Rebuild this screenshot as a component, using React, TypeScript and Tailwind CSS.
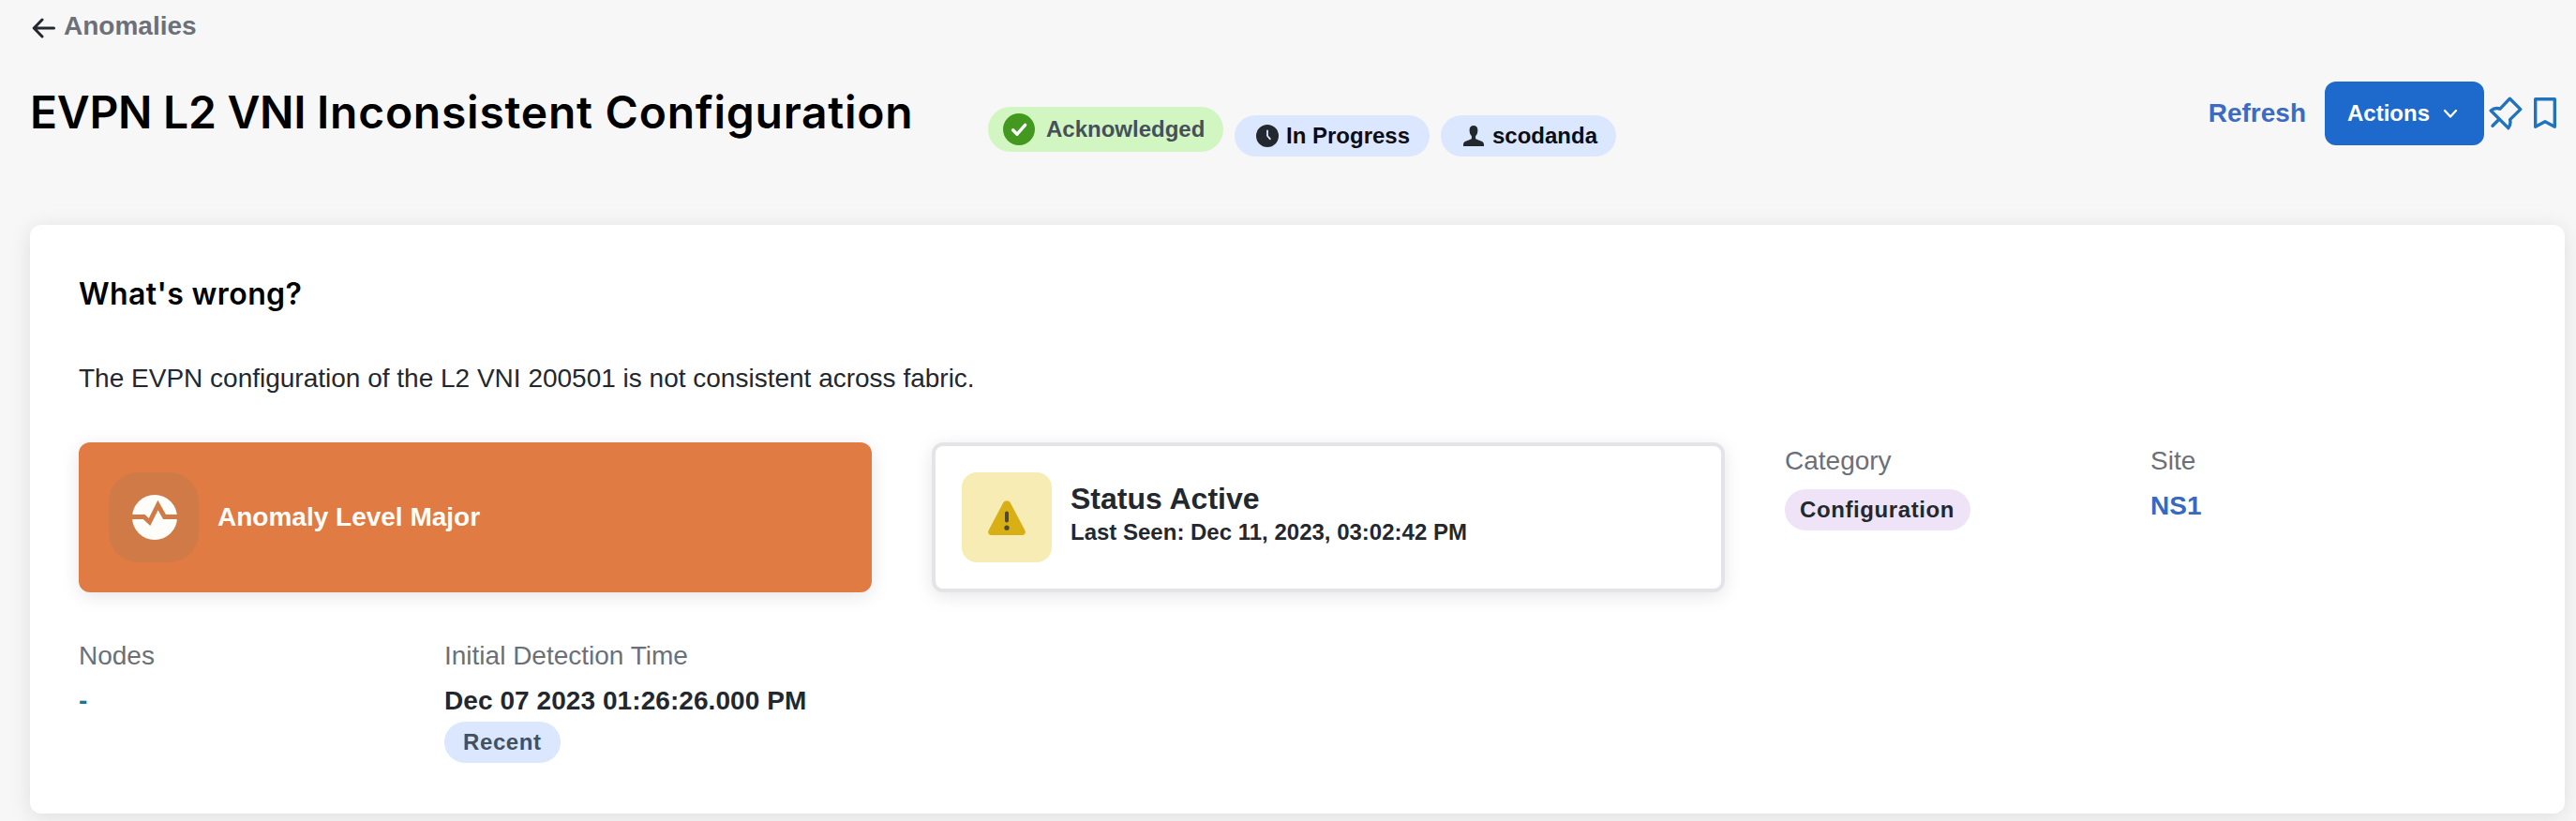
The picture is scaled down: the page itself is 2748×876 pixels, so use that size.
import type { ReactNode } from "react";
import clsx from "clsx";

function ArrowLeftIcon() {
  return (
    <svg width="26" height="22" viewBox="0 0 26 22" fill="none" stroke="#23282e" strokeWidth="3" strokeLinecap="round" strokeLinejoin="round">
      <path d="M11 2 2.2 11 11 20M2.5 11H23.5" />
    </svg>
  );
}

function CheckIcon() {
  return (
    <svg width="34" height="34" viewBox="0 0 34 34" fill="none">
      <circle cx="17" cy="17" r="17" fill="#43991f" />
      <path d="M10.6 17.8 15 22.2 23.6 12.4" stroke="#fff" strokeWidth="3.4" strokeLinecap="round" strokeLinejoin="round" />
    </svg>
  );
}

function ClockIcon() {
  return (
    <svg width="24" height="24" viewBox="0 0 24 24" fill="none">
      <circle cx="12" cy="12" r="12" fill="#23282e" />
      <path d="M12 6.5V12L14.8 15.2" stroke="#dbe7ff" strokeWidth="1.8" strokeLinecap="round" strokeLinejoin="round" />
    </svg>
  );
}

function UserIcon() {
  return (
    <svg width="22" height="22" viewBox="0 0 22 22" fill="#23282e">
      <path d="M11 0c2.700 0 4.400 1.800 4.400 4.800 0 3-.9 5.200-2.300 6.400v2.200c0 .5.200.8.700 1L19.500 16.700C21.200 17.400 22 18.500 22 20.200V22H0v-1.800c0-1.700.8-2.800 2.500-3.500l5.700-2.300c.5-.2.700-.5.700-1v-2.200C7.500 10 6.600 7.800 6.600 4.800 6.600 1.800 8.300 0 11 0Z" />
    </svg>
  );
}

function PinIcon() {
  return (
    <svg width="36" height="36" viewBox="0 0 36 36" fill="none" stroke="#2173be" strokeWidth="3.4" strokeLinecap="round" strokeLinejoin="round">
      <path d="M22.400 2.200 33.800 13.600 22.600 24.600C23.400 28 23 31 20.800 33.600L2.200 15C5 12.600 8.600 12 12 13.200Z" />
      <path d="M11 24.200 4 31.200" />
    </svg>
  );
}

function BookmarkIcon() {
  return (
    <svg width="24" height="34" viewBox="0 0 24 34" fill="none" stroke="#2173be" strokeWidth="3.4" strokeLinejoin="round">
      <path d="M1.700 1.700H22.300V31.200L12 25.800 1.700 31.200Z" />
    </svg>
  );
}

function PulseIcon() {
  return (
    <svg width="48" height="48" viewBox="0 0 48 48" fill="none">
      <circle cx="24" cy="24" r="24" fill="#fffdfa" />
      <path d="M-1 23.500H12.600L18.500 29 27.500 11 34.500 23.500H49" stroke="#cf7a47" strokeWidth="5" />
    </svg>
  );
}

function WarningIcon() {
  return (
    <svg width="40" height="37" viewBox="0 0 40 37" fill="none">
      <path d="M16.300 2.300C17.900-.6 22.100-.6 23.700 2.300L39.300 31.800C40.700 34.300 39.300 37 36.500 37H3.500C.7 37-.7 34.300.7 31.800Z" fill="#d9af16" />
      <path d="M20 13.600V21.600" stroke="#4f4a33" strokeWidth="4" strokeLinecap="round" />
      <circle cx="20" cy="29.200" r="2.600" fill="#4f4a33" />
    </svg>
  );
}

function Pill({ className, children }: { className: string; children: ReactNode }) {
  return (
    <div className={clsx("flex shrink-0 items-center rounded-full text-2xl font-bold whitespace-nowrap", className)}>
      {children}
    </div>
  );
}

function Field({ label, className, children }: { label: string; className?: string; children: ReactNode }) {
  return (
    <div className={clsx("pt-0.5 text-[28px] leading-9 whitespace-nowrap", className)}>
      <h3 className="text-[#6b7078]">{label}</h3>
      {children}
    </div>
  );
}

export default function App() {
  return (
    <div className="h-[876px] overflow-hidden bg-[#f7f7f7] pr-3 pl-8 font-['Liberation_Sans',Arial,sans-serif] text-[#23282e]">
      {/* Breadcrumb */}
      <a href="#" className="flex w-fit items-center gap-2 pt-3 pl-[2px] text-[28px] leading-8 font-bold text-[#6b7079]">
        <span className="mt-1">
          <ArrowLeftIcon />
        </span>
        Anomalies
      </a>

      {/* Title bar */}
      <div className="mt-[43px] flex h-20 items-start">
        <h1 className="mt-[3px] w-[1022px] font-['Inter',sans-serif] text-[48px] leading-[60px] font-semibold tracking-[0.75px] whitespace-nowrap text-black">
          <span className="tracking-[-0.28px]">EVPN L2 VNI </span>
          Inconsistent Configuration
        </h1>
        <div className="flex items-start gap-3">
          <Pill className="mt-[27px] h-12 w-[251px] gap-3 bg-[#d1f6c1] pl-4 text-[#45505a]">
            <CheckIcon />
            Acknowledged
          </Pill>
          <Pill className="mt-9 h-11 w-[208px] gap-2 bg-[#dbe7ff] pl-[23px] text-[#0b0c14]">
            <ClockIcon />
            In Progress
          </Pill>
          <Pill className="mt-9 h-11 w-[187px] gap-[9px] bg-[#dbe7ff] pl-6 text-[#0b0c14]">
            <UserIcon />
            scodanda
          </Pill>
        </div>

        <div className="ml-auto flex h-[68px] items-center pr-[9px]">
          <a href="#" className="text-[28px] font-bold text-[#3c6bc4]">
            Refresh
          </a>
          <button className="ml-5 flex h-[68px] w-[170px] items-center rounded-xl bg-[#1d69cc] pl-6 text-2xl font-bold text-white">
            Actions
            <svg className="ml-3.5" width="16" height="11" viewBox="0 0 16 11" fill="none" stroke="#fff" strokeWidth="2.300" strokeLinecap="round" strokeLinejoin="round">
              <path d="M2 2 8 8.500 14 2" />
            </svg>
          </button>
          <span className="ml-[5px]">
            <PinIcon />
          </span>
          <span className="ml-3">
            <BookmarkIcon />
          </span>
        </div>
      </div>

      {/* Summary card */}
      <section className="mt-[73px] h-[628px] rounded-xl bg-white pt-[54px] pl-[52px] shadow-[0_4px_24px_rgba(0,0,0,0.1)]">
        <h2 className="font-['Inter',sans-serif] text-[32px] leading-10 font-semibold tracking-[0.4px] text-black">What's wrong?</h2>
        <p className="mt-[50px] text-[28px] leading-10">
          The EVPN configuration of the L2 VNI 200501 is not consistent across fabric.
        </p>

        <div className="mt-12 grid w-[2536px] grid-cols-20 gap-x-16 gap-y-12">
          <div className="col-span-7 flex h-40 items-center gap-5 rounded-xl bg-[#e07b43] px-8 shadow-[0_4px_20px_rgba(0,0,0,0.1)]">
            <div className="flex size-24 items-center justify-center rounded-[32px] bg-[#cf7a47] pl-0.5">
              <PulseIcon />
            </div>
            <span className="text-[28px] font-bold text-[#fffdfa]">Anomaly Level Major</span>
          </div>

          <div className="col-span-7 flex h-40 items-center gap-5 rounded-xl border-4 border-[#e3e4e8] bg-white px-7 shadow-[0_4px_20px_rgba(0,0,0,0.1)]">
            <div className="flex size-24 items-center justify-center rounded-2xl bg-[#f7ecb3]">
              <WarningIcon />
            </div>
            <div className="pb-1 font-bold">
              <p className="text-[32px] leading-9">Status Active</p>
              <p className="text-2xl leading-9">Last Seen: Dec 11, 2023, 03:02:42 PM</p>
            </div>
          </div>

          <Field label="Category" className="col-span-3">
            <Pill className="mt-3 h-11 w-[198px] bg-[#efe4f7] pl-4 tracking-[0.6px]">Configuration</Pill>
          </Field>
          <Field label="Site" className="col-span-3">
            <p className="mt-3 font-bold text-[#3569c3]">NS1</p>
          </Field>

          <Field label="Nodes" className="col-span-3 col-start-1">
            <p className="mt-3 font-bold text-[#1f7396]">-</p>
          </Field>
          <Field label="Initial Detection Time" className="col-span-4">
            <p className="mt-3 font-bold tracking-[0.07px]">Dec 07 2023 01:26:26.000 PM</p>
            <Pill className="mt-1 h-11 w-[124px] bg-[#dbe7ff] pl-5 tracking-[0.6px] text-[#45505d]">Recent</Pill>
          </Field>
        </div>
      </section>
    </div>
  );
}
